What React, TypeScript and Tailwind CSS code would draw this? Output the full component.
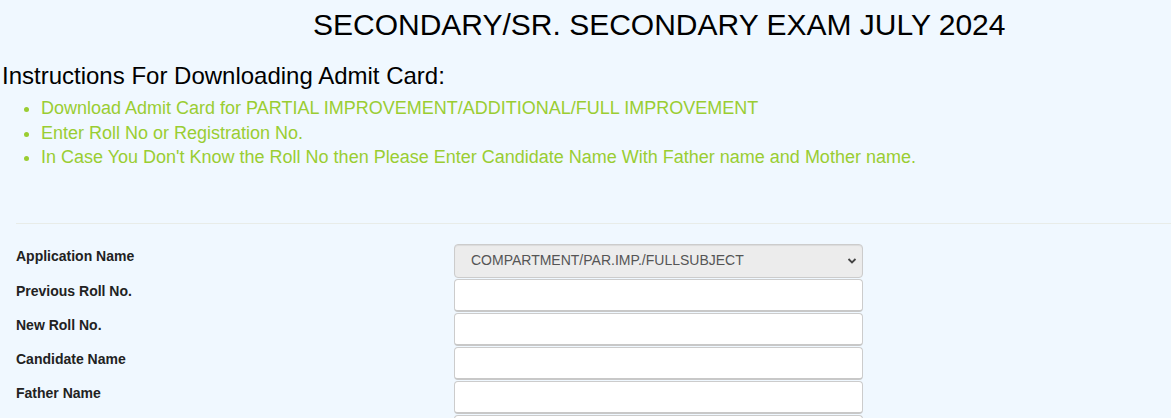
import React from 'react'

const fields = ['Previous Roll No.', 'New Roll No.', 'Candidate Name', 'Father Name', 'Mother Name']

export default function App() {
	return (
		<div className="min-h-[418px] bg-[#f0f8ff] font-['Liberation_Sans',Arial,sans-serif] text-black">
			<h1 className="pl-[313px] pt-[7px] text-[30px] leading-[36px]">
				SECONDARY/SR. SECONDARY EXAM JULY 2024
			</h1>

			<h3 className="mt-[19px] pl-[2px] text-[24px] leading-[28px]">
				Instructions For Downloading Admit Card:
			</h3>
			<ul className="mt-[6px] list-disc pl-[41px] text-[18px] leading-[24.5px] text-[#9acd32]">
				<li>Download Admit Card for PARTIAL IMPROVEMENT/ADDITIONAL/FULL IMPROVEMENT</li>
				<li>Enter Roll No or Registration No.</li>
				<li>In Case You Don't Know the Roll No then Please Enter Candidate Name With Father name and Mother name.</li>
			</ul>

			<hr className="ml-[16px] mt-[53px] border-t border-[#e8ece8]" />

			<form className="pl-[16px] pt-[20px]">
				<div className="flex h-[34px]">
					<label className="w-[438px] pt-[4px] text-[14px] font-bold leading-[16px] text-[#222]">
						Application Name
					</label>
					<div className="relative w-[409px]">
						<select className="h-[34px] w-full appearance-none rounded-[4px] border border-[#ccc] bg-[#ececec] pl-[16px] text-[14px] text-[#555] shadow-[0_1px_1px_rgba(0,0,0,0.075)_inset]">
							<option>COMPARTMENT/PAR.IMP./FULLSUBJECT</option>
						</select>
						<svg
							className="pointer-events-none absolute right-[6px] top-[13px]"
							width="10"
							height="8"
							viewBox="0 0 10 8"
						>
							<path d="M1.5 2 L5 5.5 L8.5 2" fill="none" stroke="#444" strokeWidth="1.8" />
						</svg>
					</div>
				</div>
				{fields.map((f) => (
					<div key={f} className="flex h-[34px]">
						<label className="w-[438px] pt-[5px] text-[14px] font-bold leading-[16px] text-[#222]">
							{f}
						</label>
						<input
							type="text"
							className="mt-[1px] h-[33px] w-[409px] rounded-[4px] border border-[#ccc] border-b-2 border-b-[#c8c8c8] bg-white"
						/>
					</div>
				))}
			</form>
		</div>
	)
}
